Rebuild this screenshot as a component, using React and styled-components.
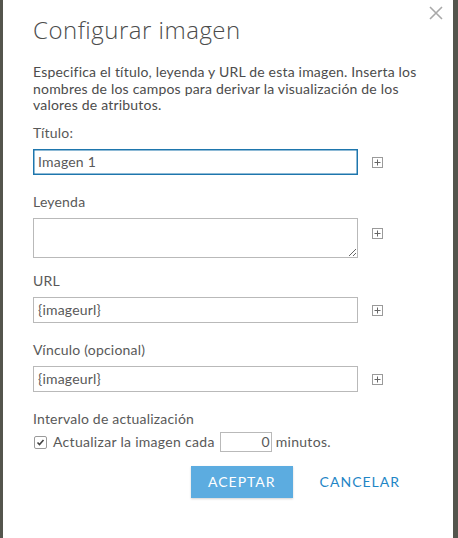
import React, {useState} from 'react';
import styled, {createGlobalStyle} from 'styled-components';

const GlobalStyle = createGlobalStyle`
    html, body {
        margin: 0;
        padding: 0;
        background: #54554d;
    }
    body {
        font-family: Lato, "Open Sans", sans-serif;
        color: #4c4c4c;
    }
`;

const Backdrop = styled.div`
    height: 538px;
    padding: 0 5px 0 3px;
    overflow: hidden;
`;

const Dialog = styled.section`
    position: relative;
    height: 100%;
    background: #fff;
    padding: 16px 0 0 30px;
    box-sizing: border-box;
`;

const CloseButton = styled.button`
    position: absolute;
    top: 6px;
    right: 10px;
    width: 14px;
    height: 14px;
    padding: 0;
    border: 0;
    background: none;
    cursor: pointer;

    svg {
        display: block;
    }
`;

const Title = styled.h2`
    margin: 0;
    font-family: "Open Sans", Lato, sans-serif;
    font-size: 24px;
    line-height: 28px;
    font-weight: 300;
    color: #4c4c4c;
    letter-spacing: 0.5px;
`;

const Description = styled.p`
    margin: 20px 0 0;
    width: 405px;
    font-size: 14px;
    line-height: 16.5px;
    letter-spacing: 0.2px;
    color: #4c4c4c;
`;

const Form = styled.div`
    display: flex;
    flex-direction: column;
    margin-top: 10px;
`;

const Field = styled.div`
    display: flex;
    flex-direction: column;
    gap: 8px;
    margin-bottom: ${({spacing}) => spacing}px;
`;

const Label = styled.label`
    font-size: 14px;
    line-height: 17px;
    letter-spacing: 0.2px;
    color: #595959;
`;

const Row = styled.div`
    display: flex;
    align-items: flex-start;
    gap: 14px;
`;

const TextInput = styled.input`
    box-sizing: border-box;
    width: 325px;
    height: 26px;
    margin: 0;
    padding: 0 4px;
    font-family: Lato, sans-serif;
    font-size: 14px;
    letter-spacing: 0.2px;
    color: #595959;
    background: #fff;
    border: 1px solid ${({focused}) => (focused ? '#1e76ad' : '#b9b9b9')};
    box-shadow: ${({focused}) => (focused ? 'inset 0 0 0 0.5px #1e76ad' : 'none')};
    outline: none;
    border-radius: 0;
`;

const TextArea = styled.textarea`
    box-sizing: border-box;
    width: 325px;
    height: 40px;
    margin: 0;
    padding: 3px 4px;
    font-family: Lato, sans-serif;
    font-size: 14px;
    border: 1px solid #b9b9b9;
    border-radius: 0;
    resize: both;
    outline: none;
    display: block;
`;

const PlusBox = styled.span`
    display: block;
    width: 11px;
    height: 11px;
    margin-top: ${({offset}) => offset}px;

    svg {
        display: block;
    }
`;

const CheckRow = styled.div`
    display: flex;
    align-items: center;
    margin-top: 5px;
    font-size: 14px;
    letter-spacing: 0.3px;
    color: #595959;
`;

const CheckBox = styled.span`
    box-sizing: border-box;
    display: flex;
    align-items: center;
    justify-content: center;
    width: 13px;
    height: 13px;
    margin: 2px 6px 0 1px;
    border: 1px solid #9a9a9a;
    border-radius: 2px;
`;

const MinutesInput = styled.input`
    box-sizing: border-box;
    width: 52px;
    height: 20px;
    margin: 0 4px 0 5px;
    padding: 0 1px 0 0;
    text-align: right;
    font-family: Lato, sans-serif;
    font-size: 14px;
    color: #595959;
    border: 1px solid #b9b9b9;
    border-radius: 0;
    outline: none;
`;

const Actions = styled.div`
    display: flex;
    align-items: center;
    margin: 14px 0 0 158px;
    gap: 27px;
`;

const Button = styled.button`
    height: 32px;
    padding: 0 ${({primary}) => (primary ? 17 : 0)}px;
    border: 0;
    border-radius: 0;
    font-family: Lato, sans-serif;
    font-size: 14px;
    letter-spacing: 1px;
    text-transform: uppercase;
    cursor: pointer;
    background: ${({primary}) => (primary ? '#5cace0' : 'transparent')};
    color: ${({primary}) => (primary ? '#fff' : '#1f86c6')};
    box-shadow: ${({primary}) => (primary ? '0 1px 2px rgba(0,0,0,0.18)' : 'none')};
`;

const PlusIcon = ({offset}) => (
    <PlusBox offset={offset}>
        <svg width="11" height="11" viewBox="0 0 11 11">
            <rect x="0.5" y="0.5" width="10" height="10" fill="none" stroke="#9a9a9a" />
            <path d="M5.5 2.5v6M2.5 5.5h6" stroke="#666" strokeWidth="1" />
        </svg>
    </PlusBox>
);

const fields = [
    {label: 'URL', value: '{imageurl}', spacing: 18},
    {label: 'Vínculo (opcional)', value: '{imageurl}', spacing: 18},
];

export default function App() {
    const [title, setTitle] = useState('Imagen 1');
    const [refresh, setRefresh] = useState(true);

    return (
        <Backdrop>
            <GlobalStyle />
            <Dialog>
                <CloseButton aria-label="Cerrar">
                    <svg width="14" height="14" viewBox="0 0 14 14">
                        <path d="M1 1l12 12M13 1L1 13" stroke="#a9a9a9" strokeWidth="1.6" />
                    </svg>
                </CloseButton>
                <Title>Configurar imagen</Title>
                <Description>
                    Especifica el título, leyenda y URL de esta imagen. Inserta los nombres de los
                    campos para derivar la visualización de los valores de atributos.
                </Description>

                <Form>
                    <Field spacing={18}>
                        <Label>Título:</Label>
                        <Row>
                            <TextInput focused value={title} onChange={e => setTitle(e.target.value)} />
                            <PlusIcon offset={8} />
                        </Row>
                    </Field>
                    <Field spacing={14}>
                        <Label>Leyenda</Label>
                        <Row>
                            <TextArea />
                            <PlusIcon offset={10} />
                        </Row>
                    </Field>
                    {fields.map(({label, value, spacing}) => (
                        <Field key={label} spacing={spacing}>
                            <Label>{label}</Label>
                            <Row>
                                <TextInput defaultValue={value} />
                                <PlusIcon offset={8} />
                            </Row>
                        </Field>
                    ))}
                    <Label>Intervalo de actualización</Label>
                    <CheckRow onClick={() => setRefresh(!refresh)}>
                        <CheckBox>
                            {refresh && (
                                <svg width="9" height="9" viewBox="0 0 9 9">
                                    <path d="M1.5 4.5l2 2 4-4.5" fill="none" stroke="#444" strokeWidth="1.6" />
                                </svg>
                            )}
                        </CheckBox>
                        Actualizar la imagen cada
                        <MinutesInput defaultValue="0" onClick={e => e.stopPropagation()} />
                        minutos.
                    </CheckRow>
                </Form>

                <Actions>
                    <Button primary>Aceptar</Button>
                    <Button>Cancelar</Button>
                </Actions>
            </Dialog>
        </Backdrop>
    );
}
